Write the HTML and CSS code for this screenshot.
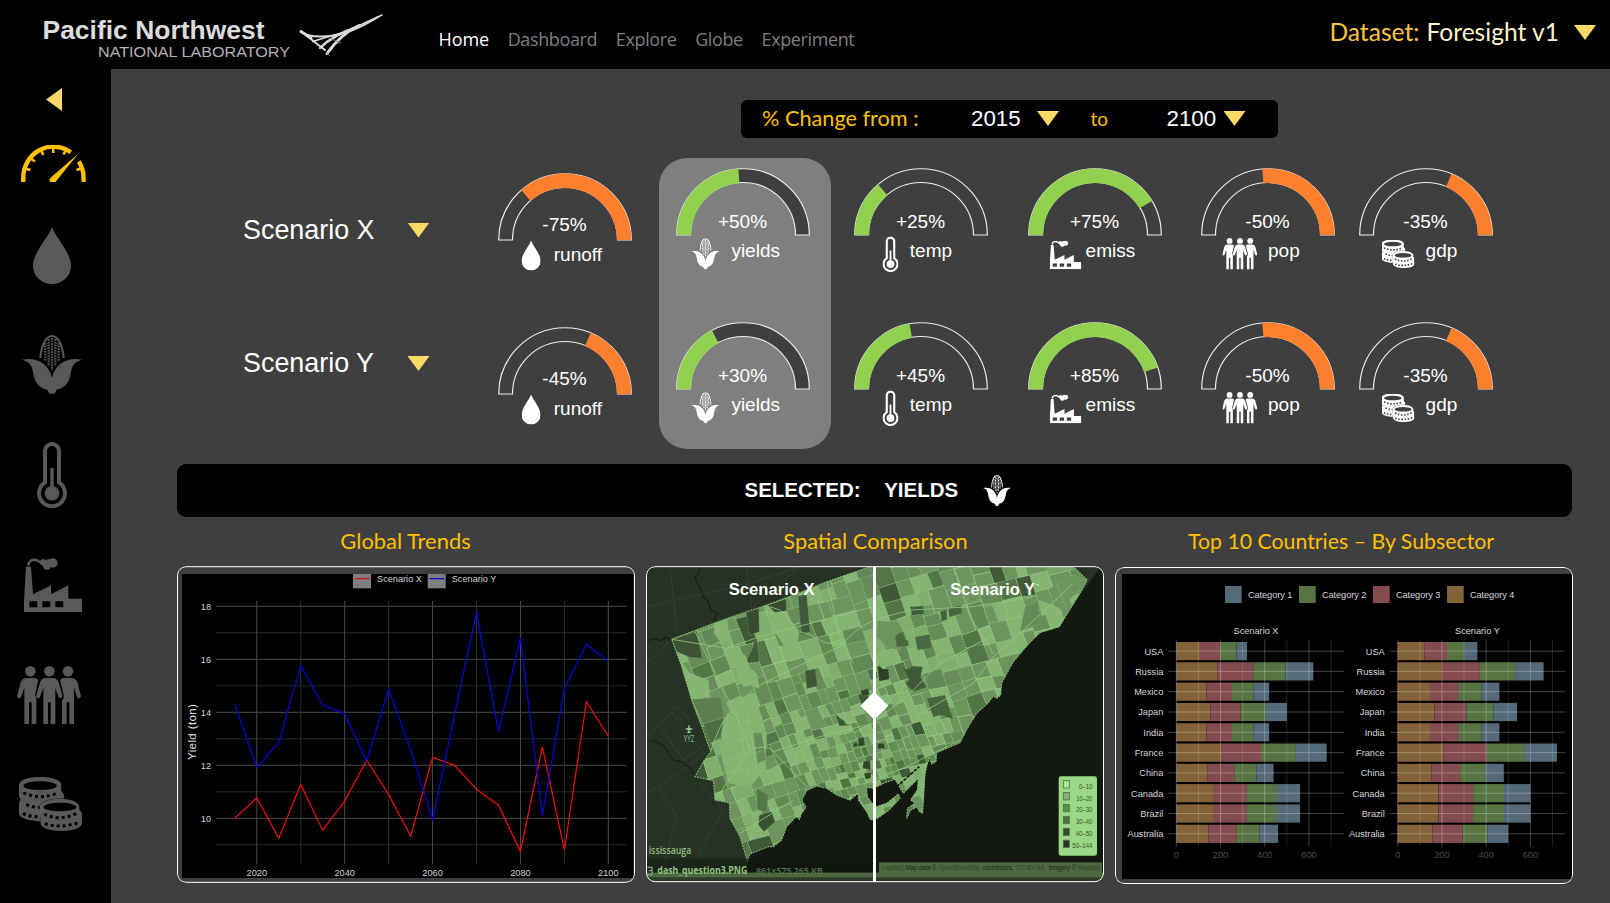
FILE: index.html
```html
<!DOCTYPE html>
<html lang="en">
<head>
<meta charset="utf-8">
<title>Foresight Dashboard</title>
<link rel="stylesheet" href="styles.css">
</head>
<body>
<svg class="defs" width="0" height="0" aria-hidden="true">
  <symbol id="i-gauge" viewBox="0 0 65 37" preserveAspectRatio="none">
    <path d="M2.3 37V33A30.2 30.8 0 0 1 49.8 7.2M57.8 16.5Q62.6 24 62.6 33V37" fill="none" stroke="currentColor" stroke-width="4.4"/>
    <path d="M3 23.500l6.500 1.500M8.500 12.500l5.500 4M19.500 4.500l3 5.500M32.300 2v6M45.500 4l-3 5.500M61.500 23l-6 2" fill="none" stroke="currentColor" stroke-width="2.600"/>
    <path d="M57.500 8.500L35 36.200A3.300 3.300 0 1 1 29.600 32.800Z" fill="currentColor"/>
  </symbol>
  <symbol id="i-drop" viewBox="0 0 110 172" preserveAspectRatio="none">
    <path d="M55 0C68 36 110 76 110 118A55 54 0 0 1 0 118C0 76 42 36 55 0Z" fill="currentColor"/>
  </symbol>
  <symbol id="i-corn" viewBox="0 0 180 178" preserveAspectRatio="none">
    <path d="M55 70C58 30 72 3 90 3S122 30 125 70" fill="none" stroke="currentColor" stroke-width="6"/>
    <path d="M70 24V80M80 13V94M90 9V106M100 13V94M110 24V80" fill="none" stroke="currentColor" stroke-width="7" stroke-dasharray="5 3"/>
    <path d="M0 75C38 66 80 82 90 130C100 82 142 66 180 75C156 81 149 96 146 116C142 140 132 160 103 165C103 174 97 178 90 178S77 174 77 165C48 160 38 140 34 116C31 96 24 81 0 75Z" fill="currentColor"/>
  </symbol>
  <symbol id="i-temp" viewBox="0 0 90 198" preserveAspectRatio="none">
    <path d="M24 27A21 21 0 0 1 66 27V121A39 39 0 1 1 24 121Z" fill="none" stroke="currentColor" stroke-width="12"/>
    <circle cx="45" cy="154" r="22" fill="currentColor"/>
    <path d="M45 78V140" stroke="currentColor" stroke-width="10"/>
  </symbol>
  <symbol id="i-factory" viewBox="0 0 174 162" preserveAspectRatio="none">
    <path fill-rule="evenodd" d="M0 162V130L6 26H21L27 109L81 82V109L133 82V122H174V162ZM16 130V148H40V130ZM55 130V148H79V130ZM94 130V148H118V130Z" fill="currentColor"/>
    <path d="M13 23C14 4 34 1 46 11S62 20 70 20" fill="none" stroke="currentColor" stroke-width="8"/>
    <g fill="currentColor"><circle cx="58" cy="13" r="10"/><circle cx="69" cy="22" r="13"/><circle cx="76" cy="14" r="11"/><circle cx="87" cy="15" r="14"/></g>
  </symbol>
  <symbol id="i-people" viewBox="0 0 192 174" preserveAspectRatio="none">
    <g fill="currentColor">
      <circle cx="40" cy="16" r="16"/><circle cx="97" cy="16" r="16"/><circle cx="153" cy="16" r="16"/>
      <path d="M26 36H52Q61 37 64 42L54 87L58 95V174H44V109H36V174H22V65L12 92Q10 98 4 96Q-1 94 1 87L11 49Q15 38 26 36Z"/>
      <path d="M83 36H111Q121 38 125 49L136 87Q137 94 132 96Q127 98 124 92L115 66V174H101V109H93V174H79V66L69 92Q66 98 61 96Q56 94 58 87L69 49Q73 38 83 36Z"/>
      <path d="M141 36H166Q177 38 181 49L191 87Q193 94 188 96Q182 98 180 92L171 65V174H157V109H149V174H135V102Q142 97 140 87L129 42Q133 37 141 36Z"/>
    </g>
  </symbol>
  <symbol id="i-coins" viewBox="0 0 188 162" preserveAspectRatio="none">
    <mask id="m-back" maskUnits="userSpaceOnUse" x="0" y="0" width="188" height="162">
      <rect width="188" height="162" fill="#fff"/>
      <ellipse cx="63" cy="26" rx="50" ry="13" fill="#000"/>
      <path d="M13 48Q63 70 117 48M22 82Q40 92 62 91M12 109Q34 120 62 119" fill="none" stroke="#000" stroke-width="9" stroke-dasharray="9 9"/>
      <path d="M62 90C62 56 180 56 180 90V98Q188 104 188 112V138C188 170 64 170 64 138Z" fill="#000"/>
    </mask>
    <mask id="m-front" maskUnits="userSpaceOnUse" x="0" y="0" width="188" height="162">
      <rect width="188" height="162" fill="#fff"/>
      <ellipse cx="122" cy="90" rx="49" ry="13" fill="#000"/>
      <path d="M75 111Q122 134 173 109M77 140Q124 156 180 136" fill="none" stroke="#000" stroke-width="9" stroke-dasharray="9 9"/>
    </mask>
    <path mask="url(#m-back)" d="M0 24C0-8 126-8 126 24V42Q134 48 135 60L110 130C80 136 0 134 0 108V82Q0 74 5 68Q0 62 0 54Z" fill="currentColor"/>
    <path mask="url(#m-front)" d="M62 90C62 57 180 57 180 90V98Q188 104 188 112V138C188 170 64 170 64 138Z" fill="currentColor"/>
  </symbol>
</svg>

<header class="topbar">
  <svg class="logo" viewBox="0 0 350 58" role="img">
    <g fill="#dcdcdc" font-family="Liberation Sans, Arial, sans-serif">
      <text x="1.500" y="30.300" font-size="25" font-weight="bold" textLength="222" lengthAdjust="spacingAndGlyphs">Pacific Northwest</text>
      <text x="57" y="47.500" font-size="14" fill="#b5b5b5" textLength="192" lengthAdjust="spacingAndGlyphs">NATIONAL LABORATORY</text>
    </g>
    <g fill="none" stroke="#dcdcdc" stroke-linecap="round">
      <path d="M260 22.500L270 29" stroke-width="3"/>
      <path d="M266 27L284 41" stroke-width="2"/>
      <path d="M266 26Q298 33 337 8" stroke-width="2"/>
      <path d="M286 44.500Q300 25 318 16.500" stroke-width="3"/>
      <path d="M316 17.500L341 6" stroke-width="1.500"/>
      <path d="M279 39Q292 26 316 18" stroke-width="2.400"/>
      <path d="M272 32.500Q288 27 312 21" stroke-width="1.800"/>
      <path d="M288 29l12 5M285 43l4 4" stroke-width=".9" stroke="#888"/>
    </g>
  </svg>
  <nav class="nav">
    <a class="nav-item nav-item--active">Home</a>
    <a class="nav-item">Dashboard</a>
    <a class="nav-item">Explore</a>
    <a class="nav-item">Globe</a>
    <a class="nav-item">Experiment</a>
  </nav>
  <div class="dataset"><span class="dataset-key">Dataset:</span><span class="dataset-value">Foresight v1</span><i class="caret caret--large"></i></div>
</header>

<div class="shell">
  <aside class="sidebar">
    <i class="caret-left"></i>
    <svg class="side-icon side-gauge"><use href="#i-gauge"/></svg>
    <svg class="side-icon side-drop"><use href="#i-drop"/></svg>
    <svg class="side-icon side-corn"><use href="#i-corn"/></svg>
    <svg class="side-icon side-temp"><use href="#i-temp"/></svg>
    <svg class="side-icon side-factory"><use href="#i-factory"/></svg>
    <svg class="side-icon side-people"><use href="#i-people"/></svg>
    <svg class="side-icon side-coins"><use href="#i-coins"/></svg>
  </aside>

  <main class="main">
    <div class="range">
      <span class="range-label">% Change from :</span>
      <span class="range-year range-from">2015</span><i class="caret"></i>
      <span class="range-to">to</span>
      <span class="range-year range-until">2100</span><i class="caret"></i>
    </div>

    <section class="overview">
      <div class="scenarios">
        <div class="scenario"><span>Scenario X</span><i class="caret"></i></div>
        <div class="scenario"><span>Scenario Y</span><i class="caret"></i></div>
      </div>
      <div class="metrics" id="metrics"></div>
    </section>

    <div class="selected"><span>SELECTED:</span><span class="selected-name">YIELDS</span><svg class="selected-icon"><use href="#i-corn"/></svg></div>

    <section class="panels">
      <div class="panel-col">
        <h2 class="title title-trends">Global Trends</h2>
        <div class="panel"><svg id="trends" class="plot" viewBox="0 0 458 317"></svg></div>
      </div>
      <div class="panel-col">
        <h2 class="title title-spatial">Spatial Comparison</h2>
        <div class="panel"><svg id="map" class="plot" viewBox="18 348 1374 951"></svg></div>
      </div>
      <div class="panel-col">
        <h2 class="title title-top">Top 10 Countries – By Subsector</h2>
        <div class="panel panel--low"><svg id="bars" class="plot" viewBox="0 0 458 317"></svg></div>
      </div>
    </section>
  </main>
</div>
<script src="app.js"></script>
</body>
</html>
```
FILE: styles.css
```css
* { box-sizing: border-box; }
body { margin: 0; width: 1610px; height: 903px; overflow: hidden; background: #3f3f3f; color: #fff; font-family: "Liberation Sans", Arial, sans-serif; }
.defs { display: block; width: 0; height: 0; }
.topbar { display: flex; align-items: flex-start; height: 69px; background: #000; }
.logo { width: 350px; height: 58px; margin: 9px 0 0 41px; flex: none; }
.nav { display: flex; gap: 18.700px; margin: 25.500px 0 0 47.500px; font: 18px/26px "Open Sans", "Noto Sans", sans-serif; letter-spacing: -.38px; color: #7f7f7f; white-space: nowrap; }
.nav-item { display: block; }
.nav-item--active { color: #fff; letter-spacing: -.1px; }
.dataset { display: flex; align-items: center; margin: 16.500px 14px 0 auto; font: 24.600px/30px Lato, sans-serif; white-space: nowrap; }
.dataset-key { color: #ffc53d; }
.dataset-value { margin-left: 7px; color: #fff2cc; }
.caret { display: block; width: 22px; height: 15px; background: #ffd966; clip-path: polygon(0 0, 100% 0, 50% 100%); flex: none; }
.caret--large { margin-left: 15px; margin-top: 2px; }

.shell { display: flex; height: 834px; }
.sidebar { width: 111px; padding-right: 7px; background: #000; display: flex; flex-direction: column; align-items: center; flex: none; }
.caret-left { width: 16px; height: 23px; margin: 19px 0 0 4px; background: #ffd966; clip-path: polygon(100% 0, 100% 100%, 0 50%); flex: none; }
.side-icon { color: #595959; flex: none; display: block; }
.side-gauge { width: 65px; height: 37px; margin: 33.500px 0 0 3px; color: #ffc000; }
.side-drop { width: 38px; height: 57px; margin-top: 45px; }
.side-corn { width: 60px; height: 59px; margin-top: 51.500px; }
.side-temp { width: 30px; height: 66px; margin-top: 48px; }
.side-factory { width: 58px; height: 54px; margin: 50px 0 0 2px; }
.side-people { width: 64px; height: 58px; margin: 54px 6px 0 0; }
.side-coins { width: 63px; height: 54px; margin: 53px 3px 0 0; }

.main { flex: 1; padding: 31px 37px 0 66px; min-width: 0; }
.range { display: flex; align-items: center; width: 537px; height: 38px; margin-left: 564px; padding-left: 21px; background: #000; border-radius: 6px; white-space: nowrap; }
.range .caret { margin-bottom: 1px; }
.range-label { width: 209px; margin-bottom: 1.500px; font: 21.700px/30px Lato, sans-serif; color: #ffc000; }
.range-year { font-size: 22.300px; }
.range-from { width: 66px; }
.range-to { width: 76px; margin-left: 31.500px; font: 19px/30px Lato, sans-serif; color: #ffc000; }
.range-until { width: 57px; }

.overview { display: flex; margin-top: 20px; height: 306px; }
.scenarios { width: 321px; padding: 55px 0 0 66px; flex: none; }
.scenario { display: flex; align-items: center; height: 34px; margin-bottom: 99.500px; font-size: 26.900px; }
.scenario span { width: 164.500px; }
.metrics { display: grid; grid-template-columns: 161.300px 195.200px 173.500px 173.500px 158px 134px; }
.metric { width: 134px; height: 291px; padding-top: 10px; }
.metric--selected { width: 171.700px; padding-left: 17.200px; border-radius: 28px; background: #7f7f7f; }
.metric--runoff { padding-top: 15px; }
.gauge { display: block; width: 134px; height: 106px; margin-bottom: 48.400px; overflow: visible; font-size: 19px; }

.selected { display: flex; align-items: center; width: 1395px; height: 53px; padding: 0 0 1px 567.500px; background: #000; border-radius: 9px; font-size: 20.500px; font-weight: bold; white-space: nowrap; }
.selected-name { margin-left: 23.500px; }
.selected-icon { width: 28px; height: 31px; margin-left: 24.500px; }

.panels { display: grid; grid-template-columns: repeat(3, 458px); column-gap: 11px; }
.title { height: 49px; margin: 0; padding-top: 9px; text-align: center; font: 21.800px/30px Lato, sans-serif; color: #ffc000; white-space: nowrap; }
.title-spatial { padding-left: 1px; }
.title-trends { font-size: 21.900px; padding-top: 8.500px; padding-right: 1px; }
.title-top { font-size: 21.300px; padding-top: 8.500px; padding-right: 6px; }
.panel { width: 458px; height: 317px; border-radius: 9px; overflow: hidden; }
.panel--low { margin-top: 1px; }
.plot { display: block; width: 458px; height: 317px; }
```
FILE: app.js
```js
const NS = 'http://www.w3.org/2000/svg';
function el(parent, tag, attrs, text) {
  const n = document.createElementNS(NS, tag);
  for (const k in attrs) n.setAttribute(k, attrs[k]);
  if (text !== undefined) n.textContent = text;
  parent.appendChild(n);
  return n;
}

/* Gauges */
const GREEN = '#92d050', ORANGE = '#ff7f2d';
const metrics = [
  { name: 'runoff', icon: 'drop', box: [23.6, 67.5, 19, 30], lx: 55.8, ly: 88.3, py: 58, color: ORANGE, vals: [['-75%', 48.7], ['-45%', 112.7]] },
  { name: 'yields', icon: 'corn', box: [15.5, 70.3, 28, 31], lx: 55.4, color: GREEN, vals: [['+50%', 86], ['+30%', 62]], selected: true },
  { name: 'temp', icon: 'temp', box: [28.5, 68.5, 16, 35.5], lx: 55.8, color: GREEN, vals: [['+25%', 49.7], ['+45%', 80]] },
  { name: 'emiss', icon: 'factory', box: [21.8, 72.5, 31.5, 28.7], lx: 57.6, color: GREEN, vals: [['+75%', 149.2], ['+85%', 161]] },
  { name: 'pop', icon: 'people', box: [21.3, 70, 35, 31.5], lx: 67, color: ORANGE, vals: [['-50%', 85], ['-50%', 85]] },
  { name: 'gdp', icon: 'coins', box: [22.7, 71.5, 33, 28.5], lx: 66.6, color: ORANGE, vals: [['-35%', 112.6], ['-35%', 112.6]] }
];
function ring(a0, a1, ro, ri) {
  const p = (a, r) => { const t = a * Math.PI / 180; return (67 - r * Math.cos(t)).toFixed(2) + ' ' + (67 - r * Math.sin(t)).toFixed(2); };
  return `M${p(a0, ro)}A${ro} ${ro} 0 0 1 ${p(a1, ro)}L${p(a1, ri)}A${ri} ${ri} 0 0 0 ${p(a0, ri)}Z`;
}
const host = document.getElementById('metrics');
for (const m of metrics) {
  const col = document.createElement('div');
  col.className = 'metric metric--' + m.name + (m.selected ? ' metric--selected' : '');
  for (const [pct, ang] of m.vals) {
    const s = el(col, 'svg', { class: 'gauge', viewBox: '0 0 134 106' });
    el(s, 'path', { d: ring(0, 180, 66.3, 52.5), fill: '#3f3f3f', stroke: '#ececec', 'stroke-width': 1.2 });
    const seg = m.color === GREEN ? [0, ang] : [ang, 180];
    el(s, 'path', { d: ring(seg[0], seg[1], 66.4, 52), fill: m.color });
    el(s, 'text', { x: 66.5, y: m.py || 59.5, 'text-anchor': 'middle', fill: '#fff' }, pct);
    const [x, y, w, h] = m.box;
    const u = el(s, 'use', { href: '#i-' + m.icon, x, y, width: w, height: h });
    u.style.color = '#fff';
    el(s, 'text', { x: m.lx, y: m.ly || 89.2, fill: '#fff' }, m.name);
  }
  host.appendChild(col);
}

/* Line chart, origin at page (177, 566) */
(function () {
  const s = document.getElementById('trends');
  el(s, 'rect', { x: 5, y: 8, width: 451.5, height: 304, fill: '#000' });
  const X = yr => 79.8 + (yr - 2020) * 4.394, Y = v => 252.3 - (v - 10) * 26.5;
  for (let v = 9; v <= 18; v++) el(s, 'path', { d: `M39 ${Y(v)}H450`, stroke: v % 2 ? '#292929' : '#4c4c4c' });
  for (let yr = 2020; yr <= 2100; yr += 10) el(s, 'path', { d: `M${X(yr)} 35V298`, stroke: yr % 20 ? '#2d302d' : '#4c4c4c' });
  const line = (d, c) => el(s, 'polyline', { points: d.map((v, i) => X(2015 + i * 5).toFixed(1) + ',' + Y(v).toFixed(1)).join(' '), fill: 'none', stroke: c, 'stroke-width': 1.3 });
  line([10, 10.77, 9.25, 11.28, 9.55, 10.65, 12.2, 10.9, 9.33, 12.3, 12, 11.1, 10.5, 8.75, 12.7, 8.8, 14.4, 13.1], '#de1010');
  line([14.3, 11.92, 12.87, 15.77, 14.27, 13.95, 12.15, 14.87, 12.6, 9.95, 13.9, 17.77, 13.27, 16.8, 10.1, 14.9, 16.57, 15.93], '#0c00d0');
  const t = { 'font-size': 9.2, fill: '#d4d4d4' };
  for (let v = 10; v <= 18; v += 2) el(s, 'text', { ...t, x: 34, y: Y(v) + 3.3, 'text-anchor': 'end' }, v);
  for (let yr = 2020; yr <= 2100; yr += 20) el(s, 'text', { ...t, x: X(yr), y: 310, 'text-anchor': 'middle' }, yr);
  el(s, 'text', { transform: 'translate(18.800 194) rotate(-90)', 'font-size': 11.5, fill: '#e0e0e0', textLength: 56 }, 'Yield (ton)');
  [['Scenario X', 176, '#de1010'], ['Scenario Y', 250.7, '#0c00d0']].forEach(([n, x, c]) => {
    el(s, 'rect', { x, y: 8, width: 18, height: 14.3, fill: '#7f7f7f' });
    el(s, 'path', { d: `M${x + 2} 12.7h14.500`, stroke: c, 'stroke-width': 1.2 });
    el(s, 'text', { ...t, x: x + 24, y: 15.8 }, n);
  });
  el(s, 'rect', { x: .5, y: .7, width: 457, height: 315.6, rx: 8.5, fill: 'none', stroke: '#fff' });
})();

/* Choropleth map, drawn in a three-units-per-pixel space */
(function () {
  const s = document.getElementById('map');
  const defs = el(s, 'defs', {});
  const clip = el(defs, 'clipPath', { id: 'city' });
  const outline = 'M95 568L240 513L380 465L480 428L560 395L690 350H1300L1342 390L1320 430L1300 462L1258 530L1200 548L1172 575L1150 600L1120 635L1098 675L1085 700L1082 735L1070 745L1060 738L1045 758L1010 790L985 830L960 878L890 908L888 935L875 942L868 925L860 950L855 975L848 1090L838 1085L832 1070L812 1080L800 1105L802 1075L825 1060L812 1050L832 1020L835 985L790 1030L778 1010L765 988L735 998L700 1015L680 1012L682 1040L705 1072L740 1060L775 1032L780 1045L745 1082L712 1105L692 1110L680 1085L655 1050L655 1030L630 1050L590 1035L560 1015L530 1008L500 1022L485 1050L498 1072L485 1090L478 1108L468 1100L440 1130L425 1170L400 1190L385 1190L330 1212L322 1232L300 1160L270 1105L268 1058L225 1050L220 992L165 980L190 935L212 905L185 830L155 750L125 650Z';
  el(clip, 'path', { d: outline });
  el(s, 'rect', { x: 18, y: 348, width: 1374, height: 951, fill: '#263223' });
  el(s, 'path', { d: 'M1300 462L1385 348H1392V1299H322V1190L480 1020L600 900Z', fill: '#131811' });
  const roads = el(s, 'g', { fill: 'none', stroke: '#33432f', 'stroke-width': 3 });
  ['M20 640L95 568L330 478L480 350', 'M20 1030L130 960L215 895', 'M90 350L110 540', 'M55 1010L110 1100L60 1290', 'M60 830L130 930L215 870', 'M90 780L200 920', 'M20 860L110 770L150 810', 'M320 350L335 480', 'M20 470L330 400L480 350', 'M180 1000L250 1080L170 1220'].forEach(d => el(roads, 'path', { d }));
  const faint = el(s, 'g', { fill: 'none', stroke: '#2a3727', 'stroke-width': 2 });
  for (let i = 0; i < 12; i++) el(faint, 'path', { d: `M20 ${900 + i * 34}L${130 + i * 14} ${985 + i * 30}M${30 + i * 24} 1220L${10 + i * 26} ${1040 + i * 4}M${30 + i * 30} 350L${45 + i * 26} ${500 - i * 6}` });
  el(s, 'path', { fill: 'none', stroke: '#182016', 'stroke-width': 4, d: 'M22 572L45 566L60 572L78 562L95 575M182 420L190 440L205 455L212 480L232 490L225 510M30 872L50 875L75 890L88 915L100 930L130 938L150 955L165 975M180 350L175 370L165 385L182 420' });

  const g = el(s, 'g', { 'clip-path': 'url(#city)' });
  el(g, 'rect', { x: 18, y: 348, width: 1374, height: 951, fill: '#75a066' });
  let seed = 20150;
  const rnd = () => { seed = (seed * 1664525 + 1013904223) >>> 0; return seed / 4294967296; };
  const fills = ['#84b573', '#7fae6e', '#84b573', '#6d935f', '#6d935f', '#678c5a', '#6d935f', '#628856', '#84b573', '#6d935f', '#547548'];
  const mix = (a, b, t) => [a[0] + (b[0] - a[0]) * t, a[1] + (b[1] - a[1]) * t];
  const blocks = el(g, 'g', { stroke: '#9ad487', 'stroke-width': 2 });
  function split(q) {
    const w = (Math.hypot(q[1][0] - q[0][0], q[1][1] - q[0][1]) + Math.hypot(q[2][0] - q[3][0], q[2][1] - q[3][1])) / 2;
    const h = (Math.hypot(q[3][0] - q[0][0], q[3][1] - q[0][1]) + Math.hypot(q[2][0] - q[1][0], q[2][1] - q[1][1])) / 2;
    const cx = (q[0][0] + q[2][0]) / 2, cy = (q[0][1] + q[2][1]) / 2;
    if (Math.max(w, h) < 300 && (cx < -40 || cx > 1450 || cy < 290 || cy > 1290)) return;
    const near = Math.min(1, Math.hypot((cx - 680) * .8, cy - 930) / 380);
    const lim = 20 + 32 * near;
    if (Math.max(w, h * .8) > lim * (1 + rnd() * .5)) {
      const t = .4 + rnd() * .2, j = (rnd() - .5) * .08;
      if (w > h * .8) {
        const a = mix(q[0], q[1], t), b = mix(q[3], q[2], t + j);
        split([q[0], a, b, q[3]]); split([a, q[1], q[2], b]);
      } else {
        const a = mix(q[0], q[3], t), b = mix(q[1], q[2], t + j);
        split([q[0], q[1], b, a]); split([a, b, q[2], q[3]]);
      }
      return;
    }
    const r = rnd();
    const f = r < .02 ? '#3f5937' : fills[Math.floor(rnd() * fills.length)];
    el(blocks, 'polygon', { points: q.map(p => p.map(v => v.toFixed(0)).join(',')).join(' '), fill: f, 'stroke-dasharray': rnd() < .7 ? '4 4' : 'none', 'stroke-opacity': rnd() < .6 ? 1 : .6 });
  }
  split([[-140, 560], [1420, 130], [1640, 860], [120, 1380]]);

  const patch = (d, fill) => el(g, 'path', { d, fill, stroke: '#8fc27e', 'stroke-width': 1.5, 'stroke-dasharray': '3 4' });
  patch('M95 568L170 545L187 625L150 622L110 605Z', '#3c5335');
  patch('M318 485L356 475L358 545L328 555Z', '#384c32');
  patch('M383 465L438 447L440 482L405 488Z', '#384c32');
  patch('M474 440L500 430L510 545L484 555Z', '#40583a');
  patch('M335 600L350 560L358 635L315 640Z', '#42593a');
  patch('M495 662L526 656L532 708L500 716Z', '#3e5736');
  patch('M155 748L243 742L252 800L190 822Z', '#5c8050');
  patch('M190 822L252 803L243 860L212 880Z', '#4d6d43');
  patch('M110 615L150 670L205 690L210 742L155 745Z', '#84b573');
  patch('M262 790L355 770L380 850L375 960L330 1010L265 1000L240 900Z', '#84b573');
  patch('M340 850L365 848L378 930L352 940Z', '#658a58');
  patch('M405 488L440 482L452 510L478 545L470 590L430 585L400 540Z', '#84b573');
  patch('M225 520L262 510L268 570L245 580L222 550Z', '#84b573');
  patch('M275 590L298 600L318 620L330 655L350 670L358 715L330 705L310 710L285 650Z', '#84b573');
  patch('M358 1095L395 1085L405 1115L372 1145L355 1125Z', '#38502f');
  patch('M350 1015L385 1035L380 1085L352 1080Z', '#547548');
  patch('M585 790L600 805L610 810L618 822L635 825L598 828Z', '#3e5736');
  patch('M662 722L685 715L688 735L665 738Z', '#31452b');
  patch('M712 512L775 515L800 560L780 600L740 592L712 560Z', '#6d935f');
  patch('M765 560L775 550L790 545L795 565L806 575L806 588L770 592Z', '#4a6841');
  patch('M825 560L870 553L875 595L832 600Z', '#4a6841');
  patch('M810 470L850 468L852 492L816 496Z', '#3f5a37');
  patch('M900 485L920 478L922 508L905 515ZM925 476L963 465L966 490L928 502Z', '#46643d');
  patch('M712 650L720 648L726 656L745 658L748 688L718 694Z', '#2c3f27');
  patch('M785 650L800 658L820 648L848 650L842 680L860 712L820 725L795 700L808 690Z', '#3f5a37');
  patch('M860 745L915 735L940 808L900 795L880 802Z', '#47653d');
  patch('M1195 450L1240 465L1268 490L1205 497Z', '#84b573');
  patch('M1205 430L1300 375L1342 390L1262 480Z', '#6d935f');
  patch('M1155 470L1195 455L1200 520L1140 545Z', '#658a58');
  patch('M655 865L672 862L675 885L655 890ZM670 935L690 930L692 960L668 955ZM712 880L732 880L735 895L714 897ZM640 880L652 878L652 890L642 892ZM672 970L694 968L692 985L676 988Z', '#31452b');
  const patterned = el(g, 'g', { fill: 'none', stroke: '#98d085', 'stroke-width': 2, 'stroke-dasharray': '4 4' });
  ['M270 830L370 800M262 880L375 850M255 930L378 900M262 970L370 950M290 785L330 1000M318 778L355 980', 'M1250 400L1280 480M1225 420L1245 470'].forEach(d => el(patterned, 'path', { d }));
  const streets = el(g, 'g', { fill: 'none', stroke: '#93c982', 'stroke-width': 2.5 });
  ['M95 568L260 595L360 560L700 470', 'M165 545L290 800L330 900', 'M212 905Q240 820 260 800L350 710L450 660L600 590Q660 520 720 505L810 480L1000 470L1180 440', 'M480 545Q510 550 540 570T600 570', 'M560 390L600 560L640 640', 'M400 905L540 860L700 820Q760 770 800 740L900 640L1050 560', 'M225 1050L330 900Q380 880 400 905L500 1010', 'M712 800L760 740L800 700', 'M700 990L800 950L960 870', 'M1300 400L1150 540L1060 620L1000 700L860 780', 'M300 1150L460 1050', 'M940 350L990 500L1060 610', 'M390 470Q450 480 470 560'].forEach(d => el(streets, 'path', { d }));
  el(s, 'path', { d: outline, fill: 'none', stroke: '#84b573', 'stroke-width': 3.5, 'stroke-dasharray': '5 4' });
  el(s, 'path', { d: 'M770 1010L838 950', stroke: '#131811', 'stroke-width': 5, 'stroke-dasharray': '10 4' });

  el(s, 'rect', { x: 18, y: 1225, width: 684, height: 43, fill: '#10150f', opacity: .5 });
  el(s, 'rect', { x: 18, y: 1268, width: 1374, height: 31, fill: '#2d3d28' });
  el(s, 'rect', { x: 18, y: 1268, width: 1374, height: 14, fill: '#4c6841' });
  el(s, 'rect', { x: 717, y: 1237, width: 669, height: 34, fill: '#4c6841' });

  const nf = '"Open Sans", "Noto Sans", sans-serif';
  const T = (x, y, str, len, size, fill, weight, family) => el(s, 'text', { x, y, 'font-family': family || nf, 'font-size': size, fill, 'font-weight': weight || 400, textLength: len, lengthAdjust: 'spacingAndGlyphs' }, str);
  T(26, 1212, 'ississauga', 128, 31, '#8fba80', 600);
  T(131, 877, 'YYZ', 32, 26, '#8fba80', 400);
  el(s, 'path', { d: 'M147 826V848M138 837H157M142 847H152', stroke: '#a5cf96', 'stroke-width': 4 });
  el(s, 'path', { d: 'M22 1252H36V1274H22M26 1262H34', fill: 'none', stroke: '#7aa66b', 'stroke-width': 4 });
  T(52, 1273, 'dash_question3.PNG', 270, 29, '#8fc27e', 700);
  T(348, 1273, '861×575 265 KB', 200, 29, '#587a4d', 600);

  const credit = (x, end, str, fill) => T(x, 1259, str, end - x, 20, fill, 400, '"Liberation Sans", Arial, sans-serif');
  const DARK = '#1a2616', LINK = '#2f4528';
  credit(726, 787, 'Leaflet', LINK);
  credit(790, 793, '|', DARK);
  credit(797, 889, 'Map data ©', DARK);
  credit(894, 1021, 'OpenStreetMap', LINK);
  credit(1027, 1121, 'contributors,', DARK);
  credit(1130, 1218, 'CC-BY-SA,', LINK);
  credit(1226, 1308, 'Imagery ©', DARK);
  credit(1314, 1378, 'Mapbox', LINK);

  el(s, 'rect', { x: 1256, y: 979, width: 115, height: 238, rx: 7, fill: '#9bd885' });
  [['0–10', '#a9e893', 40], ['10–20', '#84b573', 48], ['20–30', '#648a57', 49], ['30–40', '#4f7045', 49], ['40–50', '#324a2c', 50], ['50–144', '#243820', 60]].forEach(([str, c, len], i) => {
    el(s, 'rect', { x: 1270, y: 992 + i * 35.7, width: 18, height: 22, fill: c, stroke: '#527348', 'stroke-width': 2.5 });
    T(1357 - len, 1016 + i * 35.7, str, len, 20, '#36552e', 400, '"Liberation Sans", Arial, sans-serif');
  });

  const label = { 'font-size': 48.5, 'font-weight': 'bold', fill: '#fff' };
  el(s, 'text', { ...label, x: 266, y: 434, textLength: 258, lengthAdjust: 'spacingAndGlyphs' }, 'Scenario X');
  el(s, 'text', { ...label, x: 931, y: 434, textLength: 254, lengthAdjust: 'spacingAndGlyphs' }, 'Scenario Y');
  el(s, 'text', { x: 1186, y: 434, 'font-size': 46, fill: '#cfe6c6' }, '`');
  el(s, 'rect', { x: 699, y: 350, width: 9, height: 945, fill: '#fff' });
  el(s, 'path', { d: 'M703 725L745 767L703 809L661 767Z', fill: '#fff' });
  const corner = 'M18 348H1392V1299H18ZM46 350A26 26 0 0 0 20 376V1270A26 26 0 0 0 46 1296H1364A26 26 0 0 0 1390 1270V376A26 26 0 0 0 1364 350Z';
  el(s, 'path', { d: corner, fill: '#3f3f3f', 'fill-rule': 'evenodd' });
  el(s, 'rect', { x: 19.5, y: 350, width: 1371, height: 945, rx: 26, fill: 'none', stroke: '#fff', 'stroke-width': 3 });
})();

/* Stacked bars, origin at page (1115, 567) */
(function () {
  const s = document.getElementById('bars');
  el(s, 'rect', { x: 7, y: 7, width: 450, height: 305, fill: '#000' });
  const cats = ['#85633a', '#844c50', '#597443', '#546a79'];
  const names = ['USA', 'Russia', 'Mexico', 'Japan', 'India', 'France', 'China', 'Canada', 'Brazil', 'Australia'];
  const sets = [
    ['Scenario X', 61.3, [[107, 198, 272, 320], [185, 348, 495, 620], [136, 252, 348, 420], [154, 291, 405, 500], [136, 252, 348, 420], [202, 383, 541, 680], [140, 262, 362, 440], [170, 320, 451, 560], [170, 320, 451, 560], [145, 271, 377, 460]]],
    ['Scenario Y', 282.7, [[120, 223, 300, 360], [199, 372, 531, 660], [146, 273, 378, 460], [166, 311, 434, 540], [146, 273, 378, 460], [208, 400, 571, 720], [152, 282, 395, 480], [184, 341, 481, 600], [184, 341, 481, 600], [158, 294, 405, 500]]]
  ];
  const k = .2211, t = { 'font-size': 9.2, fill: '#d8d8d8' };
  for (const [title, x0, rows] of sets) {
    rows.forEach((r, i) => {
      let p = 0;
      r.forEach((v, j) => { el(s, 'rect', { x: x0 + p * k, y: 75 + i * 20.3, width: (v - p) * k, height: 18.2, fill: cats[j] }); p = v; });
      el(s, 'path', { d: `M${x0 - 8} ${84.1 + i * 20.3}H${x0 + 167.5}`, stroke: '#fff', opacity: .26 });
      el(s, 'text', { ...t, x: x0 - 13, y: 87.5 + i * 20.3, 'text-anchor': 'end' }, names[i]);
    });
    for (let v = 0; v <= 700; v += 100) el(s, 'path', { d: `M${x0 + v * k} 72.3V279.7`, stroke: '#fff', opacity: v % 200 ? .13 : .25 });
    for (let v = 0; v <= 600; v += 200) el(s, 'text', { ...t, fill: '#4d4d4d', x: x0 + v * k, y: 290.7, 'text-anchor': 'middle' }, v);
    el(s, 'text', { ...t, x: x0 + 79.7, y: 66.6, 'text-anchor': 'middle' }, title);
  }
  ['Category 1', 'Category 2', 'Category 3', 'Category 4'].forEach((n, i) => {
    el(s, 'rect', { x: 110 + i * 74, y: 19, width: 16.7, height: 17, fill: cats[3 - i] });
    el(s, 'text', { ...t, x: 133 + i * 74, y: 31.2, textLength: 44.3 }, n);
  });
  el(s, 'rect', { x: .5, y: .5, width: 457, height: 316, rx: 8.5, fill: 'none', stroke: '#fff' });
})();
```
